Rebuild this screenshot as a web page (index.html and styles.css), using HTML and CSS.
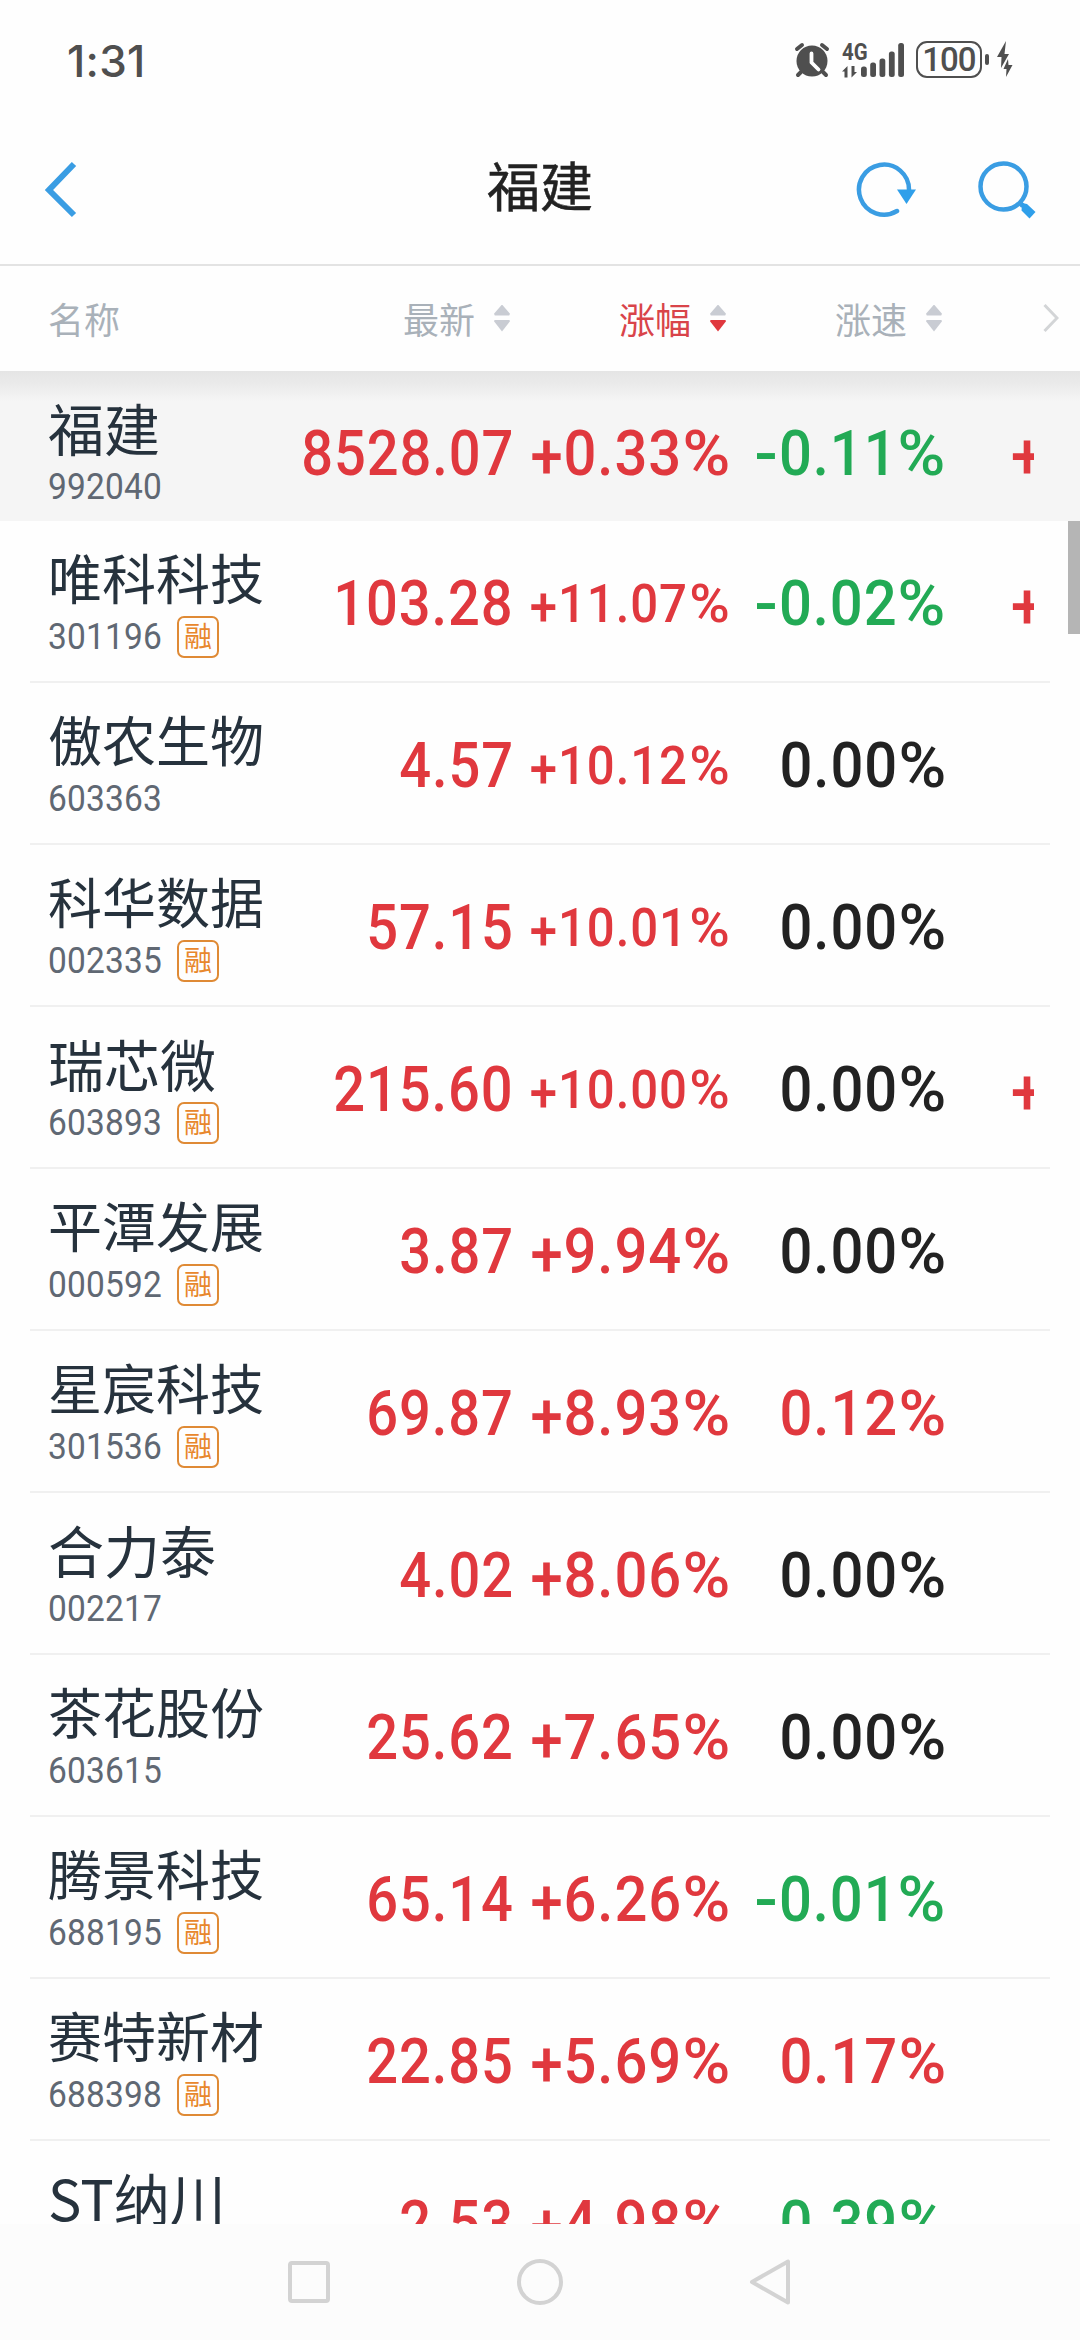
FILE: index.html
```html
<!DOCTYPE html>
<html lang="zh-CN">
<head>
<meta charset="utf-8">
<title>福建</title>
<link rel="stylesheet" href="styles.css">
</head>
<body>
<div class="screen">
  <div class="status">
    <span class="clock">1:31</span>
    <div class="status-icons">
      <svg class="alarm" width="36" height="36" viewBox="0 0 36 36"><circle cx="18" cy="19" r="15.5" fill="#4f4f4f"/><path d="M3 7 8 3M33 7l-5-4M7 30l-3 3M29 30l3 3" stroke="#4f4f4f" stroke-width="4" stroke-linecap="round"/><path d="M17.5 11.500v9l7 7" fill="none" stroke="#fff" stroke-width="3.800" stroke-linecap="round" stroke-linejoin="round"/></svg>
      <div class="net"><span class="net-type">4G</span><svg width="15" height="12" viewBox="0 0 15 12"><path d="M0 5.500 5.500 0V11.500H2.500V5.500zM15 6 9.500 11.500V0H12.500v6z" fill="#4f4f4f"/></svg></div>
      <svg class="bars" width="44" height="36" viewBox="0 0 44 36"><g fill="#4f4f4f"><rect x="0" y="23.500" width="5.800" height="10.500" rx="2.500"/><rect x="9.200" y="19.500" width="5.800" height="14.500" rx="2.500"/><rect x="18.500" y="15.500" width="5.800" height="18.500" rx="2.500"/><rect x="27.900" y="8.500" width="5.800" height="25.500" rx="2.500"/><rect x="37.200" y="0" width="5.800" height="34" rx="2.500"/></g></svg>
      <span class="battery">100</span>
      <span class="nub"></span>
      <svg class="bolts" width="16" height="37" viewBox="0 0 16 37"><path d="M9 0 0 16h4.500L4 27l8-14H7.500zM11 18 6.500 28h3L9 36l6.500-12H11.500z" fill="#4f4f4f"/></svg>
    </div>
  </div>
  <header class="titlebar">
    <svg class="back" width="34" height="60" viewBox="0 0 34 60"><path d="M31 4 6 30l25 25" fill="none" stroke="#3a9de3" stroke-width="6" /></svg>
    <h1>福建</h1>
    <div class="tools">
      <svg width="62" height="60" viewBox="0 0 62 60"><path d="M53 30A25 25 0 1 0 41 51" fill="none" stroke="#3a9de3" stroke-width="4.500" stroke-linecap="round"/><path d="M41 29.500h19L50.500 44z" fill="#2f9fea"/></svg>
      <svg width="60" height="60" viewBox="0 0 60 60"><circle cx="26.500" cy="26.500" r="23" fill="none" stroke="#3a9de3" stroke-width="4.500"/><path d="m42 42 4 4" stroke="#3a9de3" stroke-width="5"/><path d="m45 43 5 1 8.500 8-6 6.500-8-8z" fill="#2f9fea"/></svg>
    </div>
  </header>
  <div class="heads">
    <span class="h-name">名称</span>
    <span class="h">最新<i class="sort"></i></span>
    <span class="h active">涨幅<i class="sort"></i></span>
    <span class="h">涨速<i class="sort"></i></span>
    <svg class="more" width="16" height="30" viewBox="0 0 16 30"><path d="M1.500 2 14 15 1.500 28" fill="none" stroke="#d3d5d7" stroke-width="3"/></svg>
  </div>
  <main class="list">
    <div class="row index"><div class="stock"><b class="short">福建</b><p><span class="code">992040</span></p></div><div class="cell price up"><span class="num">8528.07</span></div><div class="cell up"><span class="num"><s>+</s>0.33<i>%</i></span></div><div class="cell down"><span class="num"><u>-</u>0.11<i>%</i></span></div><div class="cell next up"><span class="num"><s>+</s></span></div></div>
    <div class="row"><div class="stock"><b>唯科科技</b><p><span class="code">301196</span><em>融</em></p></div><div class="cell price up"><span class="num">103.28</span></div><div class="cell up"><span class="num small"><s>+</s>11.07<i>%</i></span></div><div class="cell down"><span class="num"><u>-</u>0.02<i>%</i></span></div><div class="cell next up"><span class="num"><s>+</s></span></div></div>
    <div class="row"><div class="stock"><b>傲农生物</b><p><span class="code">603363</span></p></div><div class="cell price up"><span class="num">4.57</span></div><div class="cell up"><span class="num small"><s>+</s>10.12<i>%</i></span></div><div class="cell"><span class="num">0.00<i>%</i></span></div></div>
    <div class="row"><div class="stock"><b>科华数据</b><p><span class="code">002335</span><em>融</em></p></div><div class="cell price up"><span class="num">57.15</span></div><div class="cell up"><span class="num small"><s>+</s>10.01<i>%</i></span></div><div class="cell"><span class="num">0.00<i>%</i></span></div></div>
    <div class="row"><div class="stock"><b class="short">瑞芯微</b><p><span class="code">603893</span><em>融</em></p></div><div class="cell price up"><span class="num">215.60</span></div><div class="cell up"><span class="num small"><s>+</s>10.00<i>%</i></span></div><div class="cell"><span class="num">0.00<i>%</i></span></div><div class="cell next up"><span class="num"><s>+</s></span></div></div>
    <div class="row"><div class="stock"><b>平潭发展</b><p><span class="code">000592</span><em>融</em></p></div><div class="cell price up"><span class="num">3.87</span></div><div class="cell up"><span class="num"><s>+</s>9.94<i>%</i></span></div><div class="cell"><span class="num">0.00<i>%</i></span></div></div>
    <div class="row"><div class="stock"><b>星宸科技</b><p><span class="code">301536</span><em>融</em></p></div><div class="cell price up"><span class="num">69.87</span></div><div class="cell up"><span class="num"><s>+</s>8.93<i>%</i></span></div><div class="cell up"><span class="num">0.12<i>%</i></span></div></div>
    <div class="row"><div class="stock"><b class="short">合力泰</b><p><span class="code">002217</span></p></div><div class="cell price up"><span class="num">4.02</span></div><div class="cell up"><span class="num"><s>+</s>8.06<i>%</i></span></div><div class="cell"><span class="num">0.00<i>%</i></span></div></div>
    <div class="row"><div class="stock"><b>茶花股份</b><p><span class="code">603615</span></p></div><div class="cell price up"><span class="num">25.62</span></div><div class="cell up"><span class="num"><s>+</s>7.65<i>%</i></span></div><div class="cell"><span class="num">0.00<i>%</i></span></div></div>
    <div class="row"><div class="stock"><b>腾景科技</b><p><span class="code">688195</span><em>融</em></p></div><div class="cell price up"><span class="num">65.14</span></div><div class="cell up"><span class="num"><s>+</s>6.26<i>%</i></span></div><div class="cell down"><span class="num"><u>-</u>0.01<i>%</i></span></div></div>
    <div class="row"><div class="stock"><b>赛特新材</b><p><span class="code">688398</span><em>融</em></p></div><div class="cell price up"><span class="num">22.85</span></div><div class="cell up"><span class="num"><s>+</s>5.69<i>%</i></span></div><div class="cell up"><span class="num">0.17<i>%</i></span></div></div>
    <div class="row"><div class="stock"><b class="short">ST纳川</b></div><div class="cell price up"><span class="num">2.53</span></div><div class="cell up"><span class="num"><s>+</s>4.98<i>%</i></span></div><div class="cell down"><span class="num">0.39<i>%</i></span></div></div>
    <div class="scrollbar"></div>
  </main>
  <nav class="sysnav">
    <svg width="48" height="48" viewBox="0 0 48 48"><rect x="5" y="5" width="38" height="38" rx="2"/></svg>
    <svg width="48" height="48" viewBox="0 0 48 48"><circle cx="24" cy="24" r="21"/></svg>
    <svg width="48" height="48" viewBox="0 0 48 48"><path d="M41 3.500v41L5 24z"/></svg>
  </nav>
</div>
</body>
</html>
```
FILE: styles.css
```css
* { box-sizing: border-box; }
body { margin: 0; background: #fefefe; font-family: Roboto, "Noto Sans CJK SC", sans-serif; }
.screen { width: 1080px; height: 2340px; display: flex; flex-direction: column; overflow: hidden; }

.status { height: 120px; padding: 0 67px 0 67px; display: flex; justify-content: space-between; align-items: flex-start; color: #4f4f4f; }
.clock { margin-top: 34px; font: 450 44px/54px Inter, sans-serif; letter-spacing: .3px; }
.status-icons { display: flex; align-items: flex-start; padding-top: 41px; }
.alarm { margin-top: 1px; margin-right: 12px; }
.net { display: flex; flex-direction: column; width: 19px; padding-top: 1px; }
.net-type { font-size: 24px; line-height: 20px; height: 24px; font-weight: 700; transform: scaleX(.85); transform-origin: left; }
.bars { margin-top: 2px; }
.battery { margin-left: 11px; width: 66px; height: 37px; border: 2.5px solid #4f4f4f; border-radius: 11px; font-size: 33px; font-weight: 500; line-height: 33px; text-align: center; letter-spacing: -1px; }
.nub { width: 4px; height: 11px; border-radius: 2px; background: #4f4f4f; margin: 13px 8px 0 3px; }

.titlebar { height: 146px; display: grid; grid-template-columns: 1fr auto 1fr; align-items: center; border-bottom: 2px solid #e3e3e3; padding: 0 43px 5px; }
.titlebar h1 { margin: 0 0 11px; font: 400 53px/60px "Noto Sans CJK SC", sans-serif; -webkit-text-stroke: .5px #222; color: #222; }
.tools { display: flex; gap: 59px; justify-content: flex-end; }

.heads { height: 105px; padding: 0 0 2px 48px; display: grid; grid-template-columns: 248px 216px 216px 216px 1fr; align-items: center; font: 400 36px/40px "Noto Sans CJK SC", sans-serif; color: #a9b1b9; }
.h { display: flex; justify-content: flex-end; align-items: center; }
.active { color: #d9444a; }
.sort { width: 16px; height: 27px; margin: 1px 2px 0 19px; display: flex; flex-direction: column; justify-content: space-between; }
.sort::before { content: ""; height: 11px; background: #c9ccd3; clip-path: polygon(50% 0, 100% 85%, 95% 100%, 5% 100%, 0 85%); }
.sort::after { content: ""; height: 12px; background: #c9ccd3; clip-path: polygon(50% 100%, 100% 15%, 95% 0, 5% 0, 0 15%); }
.active .sort::after { background: #e0383e; }
.more { justify-self: end; margin-right: 21px; }

.list { position: relative; flex: 1; overflow: hidden; }
.row { height: 162px; margin: 0 30px; padding-left: 18px; border-bottom: 2px solid #f0f0f0; display: grid; grid-template-columns: 240px 226px 216px 216px 88px; }
.row.index { height: 150px; margin: 0; padding-left: 48px; border: 0; background: linear-gradient(#e5e5e5, #eaeaea 12px, #f0f0f0 22px, #f5f5f5 30px); }
.stock { padding-top: 29px; white-space: nowrap; }
.stock b { display: block; font: 400 54px/54px "Noto Sans CJK SC", sans-serif; color: #26323d; }
.stock .short { font-size: 56px; }
.stock p { margin: 12px 0 0; height: 42px; display: flex; align-items: center; }
.code { font-size: 36px; line-height: 42px; width: 129px; color: #606873; letter-spacing: .2px; transform: scaleX(.93); transform-origin: left; }
.stock em { width: 42px; height: 42px; border: 2px solid #df8a35; border-radius: 7px; font: 400 28px/34px "Noto Sans CJK SC", sans-serif; text-align: center; color: #e8872c; }
.cell { height: 160px; padding-top: 3px; display: flex; justify-content: flex-end; color: #222; }
.index .cell { height: 150px; }
.up { color: #e0383e; }
.down { color: #22aa55; }
.num { font-size: 63px; line-height: 160px; font-weight: 500; letter-spacing: 1px; white-space: nowrap; transform: scaleX(.92); transform-origin: right; }
.price .num { transform: scaleX(.89); }
.num.small { font-size: 54px; transform: scaleX(.91); }
.num i { display: inline-block; font-style: normal; letter-spacing: 0; transform: scaleX(1.12); transform-origin: right; margin-left: 6px; }
.num u { display: inline-block; text-decoration: none; transform: scaleX(1.2); transform-origin: right; }
.num s { display: inline-block; text-decoration: none; transform: translateY(3px); }
.next { width: 90px; height: 150px; margin-left: -2px; overflow: hidden; }
.next .num { margin-right: -10px; }
.scrollbar { position: absolute; right: 0; top: 150px; width: 12px; height: 113px; background: #b5b5b5; }

.sysnav { height: 116px; background: #fcfcfc; display: flex; justify-content: center; gap: 183px; padding-top: 34px; }
.sysnav svg { fill: none; stroke: #d3d3d3; stroke-width: 4; stroke-linejoin: round; }
```
